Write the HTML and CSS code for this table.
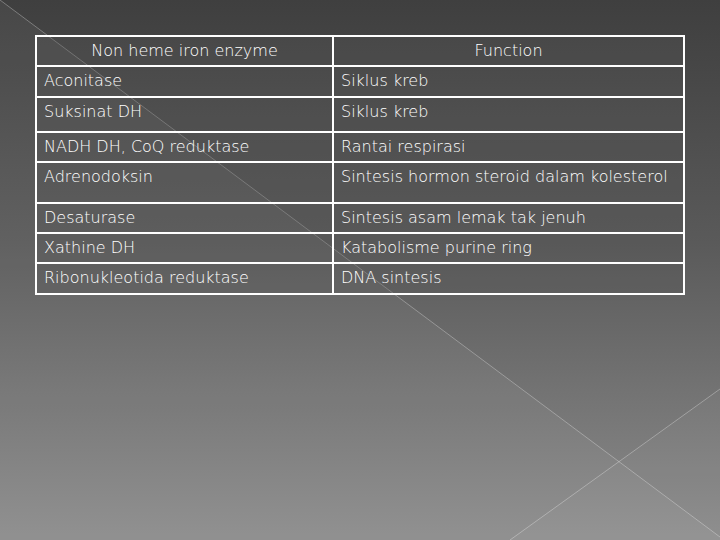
FILE: index.html
```html
<!DOCTYPE html>
<html>
<head>
<meta charset="utf-8">
<link rel="stylesheet" href="styles.css">
</head>
<body>
<div class="slide">
  <svg class="deco" width="720" height="540" viewBox="0 0 720 540">
    <polygon points="0,0 720,537 720,540 0,540" fill="rgba(255,255,255,0.045)"/>
    <polygon points="720,389 510,540 720,540" fill="rgba(255,255,255,0.03)"/>
    <line x1="0" y1="0" x2="720" y2="537" stroke="rgba(255,255,255,0.3)" stroke-width="1"/>
    <line x1="720" y1="389" x2="510" y2="540" stroke="rgba(255,255,255,0.3)" stroke-width="1"/>
  </svg>
  <table class="grid">
    <colgroup><col class="c1"><col class="c2"></colgroup>
    <tr class="row-30"><th>Non heme iron enzyme</th><th>Function</th></tr>
    <tr class="row-31"><td>Aconitase</td><td>Siklus kreb</td></tr>
    <tr class="row-35"><td>Suksinat DH</td><td>Siklus kreb</td></tr>
    <tr class="row-30"><td>NADH DH, CoQ reduktase</td><td>Rantai respirasi</td></tr>
    <tr class="row-41"><td>Adrenodoksin</td><td>Sintesis hormon steroid dalam kolesterol</td></tr>
    <tr class="row-30"><td>Desaturase</td><td>Sintesis asam lemak tak jenuh</td></tr>
    <tr class="row-30"><td>Xathine DH</td><td>Katabolisme purine ring</td></tr>
    <tr class="row-31"><td>Ribonukleotida reduktase</td><td>DNA sintesis</td></tr>
  </table>
</div>
</body>
</html>
```
FILE: styles.css
```css
html, body {
  margin: 0;
  padding: 0;
}
body {
  width: 720px;
  height: 540px;
  overflow: hidden;
  background: linear-gradient(to bottom, #3f3f3f 0%, #5a5a5a 45%, #8c8c8c 100%);
  font-family: "DejaVu Sans", Verdana, sans-serif;
}
.slide {
  position: relative;
  width: 720px;
  height: 540px;
  padding: 35px 0 0 35px;
  box-sizing: border-box;
}
.deco {
  position: absolute;
  left: 0;
  top: 0;
}
.grid {
  position: relative;
  border-collapse: collapse;
  table-layout: fixed;
  width: 650px;
  color: #ffffff;
  font-size: 16px;
}
.c1 { width: 297px; }
.grid th, .grid td {
  border: 2px solid #ffffff;
  background: rgba(85, 85, 85, 0.3);
  padding: 4px 7px 0 7px;
  vertical-align: top;
  text-align: left;
  font-weight: 200;
  line-height: 19px;
  white-space: nowrap;
}
.grid th {
  text-align: center;
}
.row-30 { height: 30px; }
.row-31 { height: 31px; }
.row-35 { height: 35px; }
.row-41 { height: 41px; }
```
